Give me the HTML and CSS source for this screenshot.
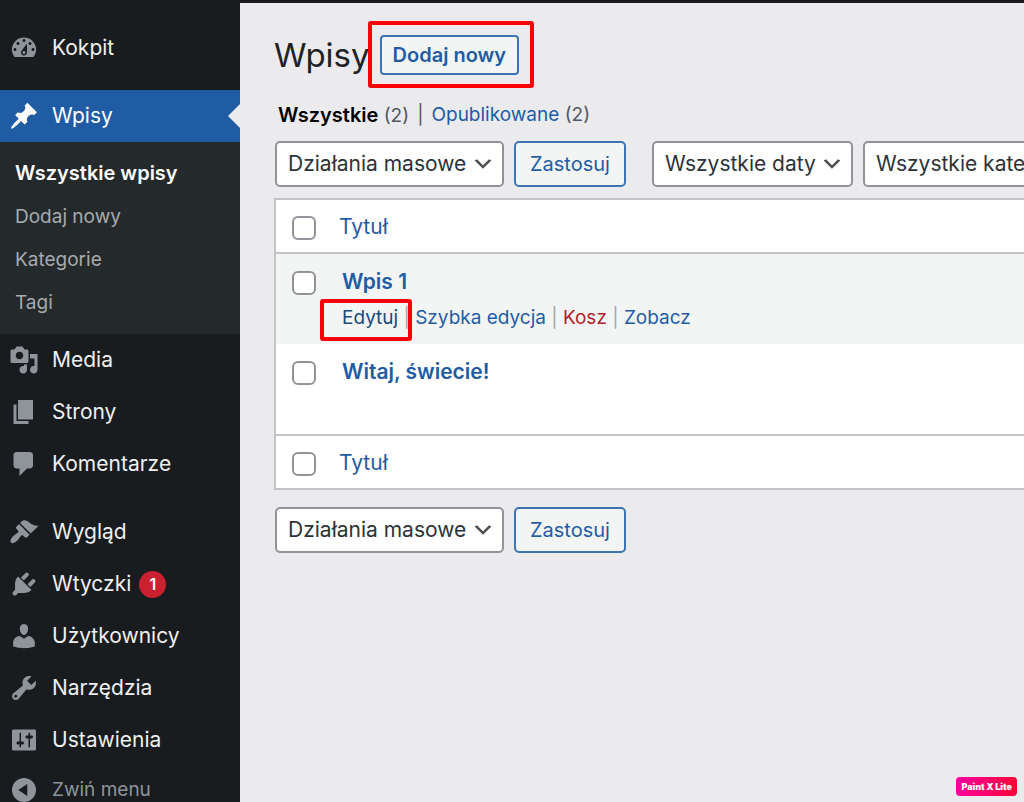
FILE: index.html
```html
<!DOCTYPE html>
<html lang="pl">
<head>
<meta charset="utf-8">
<title>Wpisy</title>
<link rel="stylesheet" href="styles.css">
</head>
<body>
<div class="admin-bar"></div>
<div class="layout">
  <nav class="sidebar" aria-label="Menu główne">
    <ul class="menu">
      <li><a class="menu-link" href="#"><svg class="icon" viewBox="0 0 20 20"><path fill-rule="evenodd" d="M3.76 16h12.48A7.998 7.998 0 0 0 10 3a7.998 7.998 0 0 0-6.24 13zM10 4c.55 0 1 .45 1 1s-.45 1-1 1-1-.45-1-1 .45-1 1-1zM6 6c.55 0 1 .45 1 1s-.45 1-1 1-1-.45-1-1 .45-1 1-1zm8 0c.55 0 1 .45 1 1s-.45 1-1 1-1-.45-1-1 .45-1 1-1zm-5.37 5.55L12 7v6c0 1.1-.9 2-2 2s-2-.9-2-2c0-.57.24-1.08.63-1.45zM4 10c.55 0 1 .45 1 1s-.45 1-1 1-1-.45-1-1 .45-1 1-1zm12 0c.55 0 1 .45 1 1s-.45 1-1 1-1-.45-1-1 .45-1 1-1zm-5 3c0-.55-.45-1-1-1s-1 .45-1 1 .45 1 1 1 1-.45 1-1z"/></svg>Kokpit</a></li>
      <li class="group"><a class="menu-link current" href="#"><svg class="icon" viewBox="0 0 20 20"><path d="M10.44 3.02l1.82-1.82 6.36 6.35-1.83 1.82c-1.05-.68-2.48-.57-3.41.36l-.75.75c-.92.93-1.04 2.35-.35 3.41l-1.83 1.82-2.41-2.41-2.8 2.79c-.42.42-3.38 2.71-3.8 2.29s1.86-3.39 2.28-3.81l2.79-2.79L4.1 9.36l1.83-1.82c1.05.69 2.48.57 3.4-.36l.75-.75c.93-.92 1.05-2.35.36-3.41z"/></svg>Wpisy</a>
        <ul class="submenu">
          <li><a class="active" href="#">Wszystkie wpisy</a></li>
          <li><a href="#">Dodaj nowy</a></li>
          <li><a href="#">Kategorie</a></li>
          <li><a href="#">Tagi</a></li>
        </ul>
      </li>
      <li><a class="menu-link" href="#"><svg class="icon" viewBox="0 0 20 20"><path fill-rule="evenodd" d="M13 11V4c0-.55-.45-1-1-1h-1.67L9 1H5L3.67 3H2c-.55 0-1 .45-1 1v7c0 .55.45 1 1 1h10c.55 0 1-.45 1-1zM7 4.5c1.38 0 2.5 1.12 2.5 2.5S8.38 9.5 7 9.5 4.5 8.38 4.5 7 5.62 4.5 7 4.5zM14 6h5v10.5c0 1.38-1.12 2.5-2.5 2.5S14 17.88 14 16.5s1.12-2.5 2.5-2.5c.17 0 .34.02.5.05V9h-3V6zm-4 8.05V13h2v3.5c0 1.38-1.12 2.5-2.5 2.5S7 17.88 7 16.5 8.12 14 9.5 14c.17 0 .34.02.5.05z"/></svg>Media</a></li>
      <li><a class="menu-link" href="#"><svg class="icon" viewBox="0 0 20 20"><path d="M6 15V2h10v13H6zm-1 1h8v2H3V5h2v11z"/></svg>Strony</a></li>
      <li><a class="menu-link" href="#"><svg class="icon" viewBox="0 0 20 20"><path d="M5 2h9c1.1 0 2 .9 2 2v7c0 1.1-.9 2-2 2h-2l-5 5v-5H5c-1.1 0-2-.9-2-2V4c0-1.1.9-2 2-2z"/></svg>Komentarze</a></li>
      <li class="group"><a class="menu-link" href="#"><svg class="icon" viewBox="0 0 20 20"><path d="M14.48 11.06L7.41 3.99l1.5-1.5c.5-.56 2.3-.47 3.51.32 1.21.8 1.43 1.28 2.91 2.1 1.18.64 2.45 1.26 4.45.85zm-.71.71L6.7 4.7 4.93 6.47c-.39.39-.39 1.02 0 1.41l1.06 1.06c.39.39.39 1.03 0 1.42-.6.6-1.43 1.11-2.21 1.69-.35.26-.7.53-1.01.84C1.43 14.23.4 16.08 1.4 17.07c.99 1 2.84-.03 4.18-1.36.31-.31.58-.66.85-1.02.57-.78 1.08-1.61 1.69-2.21.39-.39 1.02-.39 1.41 0l1.06 1.06c.39.39 1.02.39 1.41 0z"/></svg>Wygląd</a></li>
      <li><a class="menu-link" href="#"><svg class="icon" viewBox="0 0 20 20"><path d="M13.11 4.36L9.87 7.6 8 5.73l3.24-3.24c.35-.34 1.05-.2 1.56.32.52.51.66 1.21.31 1.55zm-8 1.77l.91-1.12 9.01 9.01-1.19.84c-.71.71-2.63 1.16-3.82 1.16H6.14L4.9 17.26c-.59.59-1.54.59-2.12 0-.59-.58-.59-1.53 0-2.12l1.24-1.24v-3.88c0-1.13.4-3.19 1.09-3.89zm7.26 3.97l3.24-3.24c.34-.35 1.04-.21 1.55.31.52.51.66 1.21.31 1.55l-3.24 3.25z"/></svg>Wtyczki<span class="count">1</span></a></li>
      <li><a class="menu-link" href="#"><svg class="icon" viewBox="0 0 20 20"><path d="M10 9.25c-2.27 0-2.73-3.44-2.73-3.44C7 4.02 7.82 2 9.97 2c2.16 0 2.98 2.02 2.71 3.81 0 0-.41 3.44-2.68 3.44zm0 2.57L12.72 10c2.39 0 4.52 2.33 4.52 4.53v2.49s-3.65 1.13-7.24 1.13c-3.65 0-7.24-1.13-7.24-1.13v-2.49c0-2.25 1.94-4.48 4.47-4.48z"/></svg>Użytkownicy</a></li>
      <li><a class="menu-link" href="#"><svg class="icon" viewBox="0 0 20 20"><path fill-rule="evenodd" d="M16.68 9.77c-1.34 1.34-3.3 1.67-4.95.99l-5.41 6.52c-.99.99-2.59.99-3.58 0s-.99-2.59 0-3.57l6.52-5.42c-.68-1.65-.35-3.61.99-4.95 1.28-1.28 3.12-1.62 4.72-1.06l-2.89 2.89 2.82 2.82 2.86-2.87c.53 1.58.18 3.39-1.08 4.65zM3.81 16.21c.4.39 1.04.39 1.43 0 .4-.4.4-1.04 0-1.43-.39-.4-1.03-.4-1.43 0-.39.39-.39 1.03 0 1.43z"/></svg>Narzędzia</a></li>
      <li><a class="menu-link" href="#"><svg class="icon" viewBox="0 0 20 20"><path fill-rule="evenodd" d="M18 16V4c0-.55-.45-1-1-1H3c-.55 0-1 .45-1 1v12c0 .55.45 1 1 1h14c.55 0 1-.45 1-1zM8 11h1c.55 0 1 .45 1 1s-.45 1-1 1H8v1.5c0 .28-.22.5-.5.5s-.5-.22-.5-.5V13H6c-.55 0-1-.45-1-1s.45-1 1-1h1V5.500c0-.28.22-.5.5-.5s.5.22.5.5V11zm5-2h-1c-.55 0-1-.45-1-1s.45-1 1-1h1V5.500c0-.28.22-.5.5-.5s.5.22.5.5V7h1c.55 0 1 .45 1 1s-.45 1-1 1h-1v5.500c0 .28-.22.5-.5.5s-.5-.22-.5-.5V9z"/></svg>Ustawienia</a></li>
      <li><button class="menu-link collapse" type="button"><svg class="icon" viewBox="0 0 20 20"><path fill-rule="evenodd" d="M10 2a8 8 0 1 1 0 16a8 8 0 0 1 0-16zM12.200 6v8L6.200 10z"/></svg>Zwiń menu</button></li>
    </ul>
  </nav>

  <main class="content">
    <header class="page-head">
      <h1>Wpisy</h1>
      <span class="marked"><button class="btn btn-add" type="button">Dodaj nowy</button></span>
    </header>
    <ul class="filters">
      <li><a class="active" href="#">Wszystkie</a> (2)</li>
      <li class="divider">|</li>
      <li><a href="#">Opublikowane</a> (2)</li>
    </ul>
    <div class="toolbar">
      <span class="picker picker-bulk"><select aria-label="Działania masowe"><option>Działania masowe</option></select><svg class="arrow" viewBox="0 0 20 20"><path d="M5 6l5 5 5-5 2 1-7 7-7-7 2-1z"/></svg></span>
      <button class="btn" type="button">Zastosuj</button>
      <span class="picker picker-date"><select aria-label="Filtruj po dacie"><option>Wszystkie daty</option></select><svg class="arrow" viewBox="0 0 20 20"><path d="M5 6l5 5 5-5 2 1-7 7-7-7 2-1z"/></svg></span>
      <span class="picker picker-cat"><select aria-label="Filtruj po kategorii"><option>Wszystkie kategorie</option></select><svg class="arrow" viewBox="0 0 20 20"><path d="M5 6l5 5 5-5 2 1-7 7-7-7 2-1z"/></svg></span>
    </div>
    <table class="posts">
      <thead>
        <tr><td class="check"><input type="checkbox" aria-label="Zaznacz wszystko"></td><th scope="col"><a href="#">Tytuł</a></th></tr>
      </thead>
      <tbody>
        <tr class="hovered"><td class="check"><input type="checkbox" aria-label="Zaznacz Wpis 1"></td>
          <td class="title"><a class="post-name" href="#">Wpis 1</a>
            <div class="actions"><span class="edit"><a href="#">Edytuj</a> |</span> <a href="#">Szybka edycja</a> | <a class="trash" href="#">Kosz</a> | <a href="#">Zobacz</a></div></td></tr>
        <tr><td class="check"><input type="checkbox" aria-label="Zaznacz Witaj, świecie!"></td>
          <td class="title"><a class="post-name" href="#">Witaj, świecie!</a></td></tr>
      </tbody>
      <tfoot>
        <tr><td class="check"><input type="checkbox" aria-label="Zaznacz wszystko"></td><th scope="col"><a href="#">Tytuł</a></th></tr>
      </tfoot>
    </table>
    <div class="toolbar toolbar-bottom">
      <span class="picker picker-bulk"><select aria-label="Działania masowe"><option>Działania masowe</option></select><svg class="arrow" viewBox="0 0 20 20"><path d="M5 6l5 5 5-5 2 1-7 7-7-7 2-1z"/></svg></span>
      <button class="btn" type="button">Zastosuj</button>
    </div>
  </main>
</div>
<div class="badge">Paint X Lite</div>
</body>
</html>
```
FILE: styles.css
```css
* { box-sizing: border-box; }

body {
  margin: 0;
  height: 100vh;
  overflow: hidden;
  display: flex;
  flex-direction: column;
  background: #ebebed;
  color: #2c3338;
  font: 20px/28px Inter, "Liberation Sans", sans-serif;
}

a { color: #1f5ca4; text-decoration: none; }
ul { list-style: none; margin: 0; padding: 0; }
button, select { font: inherit; }

.admin-bar { flex: none; height: 3px; background: #181c1e; }
.layout { flex: 1; min-height: 0; display: flex; }

/* Sidebar */
.sidebar { flex: none; width: 240px; padding-top: 19px; background: #181c1e; }
.menu-link {
  position: relative;
  display: flex;
  align-items: center;
  gap: 13px;
  width: 100%;
  height: 52px;
  padding: 0 9px;
  border: 0;
  background: none;
  color: #efefef;
  font-size: 21px;
}
.icon { flex: none; width: 30px; height: 30px; fill: #8f949a; }
.group { padding-top: 16px; }
.current { background: #1f5ca4; color: #fff; }
.current .icon { fill: #fff; }
.current::after {
  content: "";
  position: absolute;
  right: 0;
  top: 14px;
  border: 12px solid transparent;
  border-left-width: 0;
  border-right-color: #ebebed;
}
.submenu { padding: 10px 15px; background: #24292c; }
.submenu a { display: block; height: 43px; line-height: 43px; color: #a8abad; font-size: 19px; }
.submenu .active { color: #fff; font-size: 20px; font-weight: 600; }
.count {
  width: 27px;
  height: 27px;
  margin-left: -5px;
  border-radius: 50%;
  background: #cb2030;
  color: #fff;
  font-size: 16px;
  font-weight: 600;
  line-height: 27px;
  text-align: center;
}
.collapse { height: 48px; color: #8f949a; font-size: 19px; text-align: left; }

/* Page heading */
.content { flex: 1; min-width: 0; overflow: hidden; padding: 28px 0 0 34px; }
.page-head { display: flex; align-items: center; gap: 10px; height: 48px; }
h1 { margin: 0; font-size: 33px; font-weight: 400; line-height: 48px; color: #1d2327; }
.marked { position: relative; display: flex; }
.marked::after {
  content: "";
  position: absolute;
  inset: -14px -15px -13px -12px;
  border: 4px solid #fb0007;
  border-radius: 3px;
}
.btn {
  height: 46px;
  padding: 0 14px;
  border: 2px solid #3d74b4;
  border-radius: 5px;
  background: #f3f5f5;
  color: #1f5ca4;
  white-space: nowrap;
}
.btn-add { height: 40px; padding: 0 11px; border-radius: 4px; font-weight: 600; }

.filters { display: flex; gap: 8px; padding: 22px 0 0 4px; color: #50575e; font-size: 19px; }
.filters .active { color: #000; font-size: 20px; font-weight: 600; }

/* Toolbars */
.toolbar { display: flex; gap: 10px; padding: 11px 0 11px 1px; }
.toolbar-bottom { padding-top: 17px; }
.picker { flex: none; display: grid; align-items: center; }
.picker > * { grid-area: 1 / 1; }
.picker select {
  appearance: none;
  width: 100%;
  height: 46px;
  padding: 0 11px;
  border: 2px solid #919398;
  border-radius: 5px;
  background: #fff;
  color: #2c3338;
  font-size: 21px;
}
.arrow { justify-self: end; width: 24px; height: 24px; margin-right: 9px; fill: #50504f; pointer-events: none; }
.picker-bulk { width: 229px; }
.picker-date { width: 201px; margin-left: 16px; }
.picker-cat { width: 260px; }

/* Posts table */
.posts {
  width: calc(100% + 4px);
  border: 2px solid #c3c4c8;
  border-collapse: separate;
  border-spacing: 0;
  background: #fff;
}
.posts td, .posts th { padding: 0; font-weight: 400; text-align: left; vertical-align: top; }
.posts thead tr > *, .posts tfoot tr > * { height: 54px; padding-top: 13px; }
.posts th { font-size: 21px; }
.posts thead tr > * { border-bottom: 2px solid #c3c4c8; }
.posts tfoot tr > * { border-top: 2px solid #c3c4c8; }
.posts tbody td { height: 90px; padding-top: 14px; }
.posts .check { width: 63px; padding-left: 16px; }
.posts .title { padding-left: 3px; }
.hovered td { background: #f3f5f5; }
.check input {
  appearance: none;
  display: block;
  width: 24px;
  height: 24px;
  margin: 3px 0 0;
  border: 2px solid #919398;
  border-radius: 6px;
  background: #fff;
}
.post-name { font-size: 21px; font-weight: 600; }
.actions { margin-top: 8px; color: #a2a5a8; font-size: 19px; white-space: nowrap; }
.actions .trash { color: #ac2328; }
.edit { position: relative; }
.edit a { color: #174a7c; }
.edit::after {
  content: "";
  position: absolute;
  inset: -7px -2px -12px -22px;
  border: 4px solid #fb0007;
  border-radius: 3px;
}

.badge {
  position: fixed;
  right: 7px;
  bottom: 6px;
  padding: 0 5px;
  border-radius: 4px;
  background: linear-gradient(90deg, #fb00a0, #fa0436);
  color: #fff;
  font-size: 9px;
  font-weight: 900;
  line-height: 19px;
}
```
